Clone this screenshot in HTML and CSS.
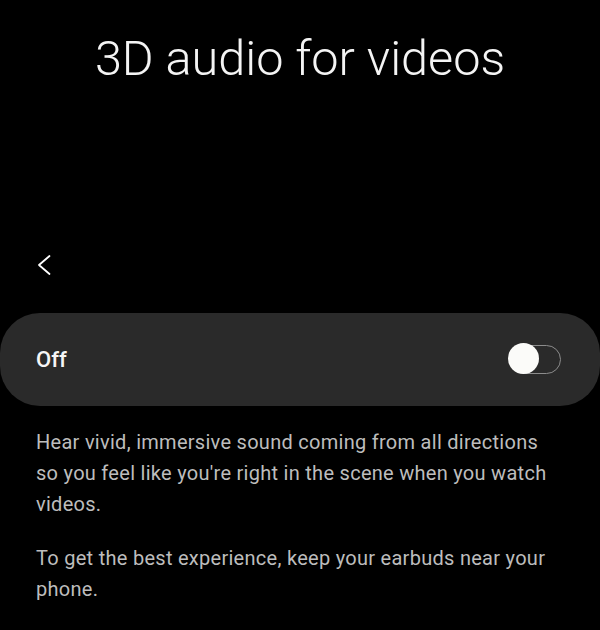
FILE: index.html
```html
<!DOCTYPE html>
<html lang="en">
<head>
<meta charset="utf-8">
<title>3D audio for videos</title>
<link rel="stylesheet" href="styles.css">
</head>
<body>
<div class="screen">
  <header class="header">
    <h1 class="title">3D audio for videos</h1>
  </header>
  <div class="nav">
    <button class="back" aria-label="Back">
      <svg width="18" height="22" viewBox="0 0 18 22" fill="none" stroke="#ffffff" stroke-width="1.8" stroke-linecap="round" stroke-linejoin="round">
        <path d="M13.5 2 L3 11 L13.5 20"/>
      </svg>
    </button>
  </div>
  <div class="panel">
    <span class="panel-label">Off</span>
    <span class="switch">
      <span class="switch-thumb"></span>
    </span>
  </div>
  <div class="desc">
    <p class="para">Hear vivid, immersive sound coming from all directions so you feel like you're right in the scene when you watch videos.</p>
    <p class="para">To get the best experience, keep your earbuds near your phone.</p>
  </div>
</div>
</body>
</html>
```

FILE: styles.css
```css
html, body {
  margin: 0;
  padding: 0;
  background: #000000;
}
body {
  font-family: Roboto, "Noto Sans", sans-serif;
  color: #ffffff;
  width: 600px;
  height: 630px;
  overflow: hidden;
}
.screen {
  display: flex;
  flex-direction: column;
}
.header {
  padding-top: 30px;
  text-align: center;
}
.title {
  margin: 0;
  font-size: 48.6px;
  font-weight: 300;
  line-height: 57px;
  color: #f4f4f4;
  letter-spacing: 0;
}
.nav {
  height: 226px;
  display: flex;
  align-items: flex-end;
  padding-left: 36px;
}
.back {
  background: none;
  border: 0;
  padding: 0;
  margin: 0 0 37px 0;
  width: 18px;
  height: 22px;
  display: block;
}
.back svg {
  display: block;
}
.panel {
  height: 93px;
  background: #2a2a2a;
  border-radius: 40px;
  display: flex;
  align-items: center;
  justify-content: space-between;
  padding: 0 39px 0 36px;
}
.panel-label {
  font-size: 22px;
  font-weight: 500;
  color: #f6f6f6;
}
.switch {
  position: relative;
  width: 49px;
  height: 27px;
  border: 1.5px solid #8c8c8c;
  border-radius: 15px;
  box-sizing: content-box;
  margin-top: -1px;
}
.switch-thumb {
  position: absolute;
  left: -3px;
  top: -2.5px;
  width: 31px;
  height: 31px;
  border-radius: 50%;
  background: #fbfbf9;
}
.desc {
  padding: 21px 40px 0 36px;
}
.para {
  margin: 0 0 23px 0;
  font-size: 20px;
  line-height: 31px;
  letter-spacing: 0.28px;
  color: #bdbdbd;
}
```
